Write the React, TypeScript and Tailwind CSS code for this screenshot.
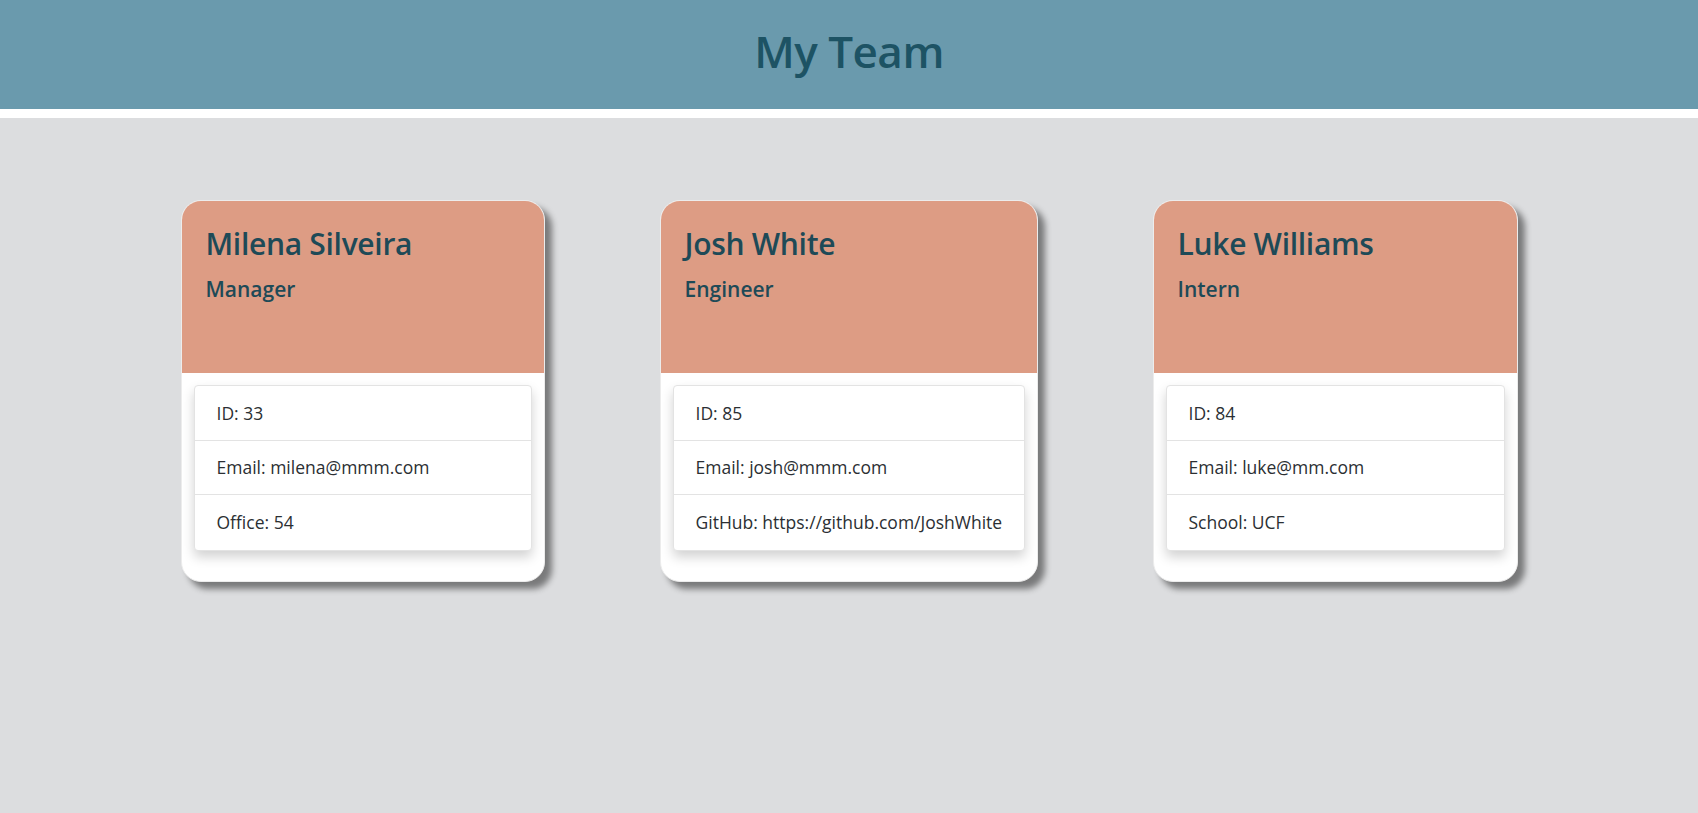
import React from "react";

type Member = {
  name: string;
  role: string;
  id: number;
  email: string;
  extra: string;
  width: string;
};

const team: Member[] = [
  { name: "Milena Silveira", role: "Manager", id: 33, email: "milena@mmm.com", extra: "Office: 54", width: "w-[364px]" },
  { name: "Josh White", role: "Engineer", id: 85, email: "josh@mmm.com", extra: "GitHub: https://github.com/JoshWhite", width: "w-[378px]" },
  { name: "Luke Williams", role: "Intern", id: 84, email: "luke@mm.com", extra: "School: UCF", width: "w-[365px]" },
];

const EmployeeCard = ({ member }: { member: Member }) => {
  return (
    <div
      className={`${member.width} overflow-hidden rounded-[20px] border border-[#ececec] bg-white shadow-[7px_7px_6px_rgba(0,0,0,0.45)]`}
    >
      <div className="h-[172px] bg-[#dd9c84] px-[24px] pt-[25px] text-[#1e4a57]">
        <h2 className="text-[30px] font-semibold tracking-[-0.3px] leading-[1.2]">{member.name}</h2>
        <h3 className="mt-[15px] text-[21px] font-semibold leading-[1.2]">{member.role}</h3>
      </div>
      <ul className="mx-[12px] mb-[30px] mt-[12px] rounded-[4px] border border-[#e3e3e3] bg-white text-[17.5px] text-[#2b2f33] shadow-[0_6px_12px_rgba(0,0,0,0.18)]">
        <li className="flex h-[55px] items-center border-b border-[#e3e3e3] px-[22px]">ID: {member.id}</li>
        <li className="flex h-[54px] items-center border-b border-[#e3e3e3] px-[22px]">Email: {member.email}</li>
        <li className="flex h-[55px] items-center px-[22px] whitespace-nowrap">{member.extra}</li>
      </ul>
    </div>
  );
};

const App = () => {
  return (
    <div
      className="min-h-screen bg-[#dcdddf]"
      style={{ fontFamily: "'Open Sans', 'Noto Sans', sans-serif" }}
    >
      <header className="flex h-[118px] items-center justify-center border-b-[9px] border-white bg-[#6a9aad] pb-[8px]">
        <h1 className="text-[44px] font-semibold tracking-[-0.5px] text-[#1d5364]">My Team</h1>
      </header>

      <main className="flex items-start justify-center gap-[115px] pt-[82px]">
        {team.map((m) => (
          <EmployeeCard key={m.id} member={m} />
        ))}
      </main>
    </div>
  );
};

export default App;
